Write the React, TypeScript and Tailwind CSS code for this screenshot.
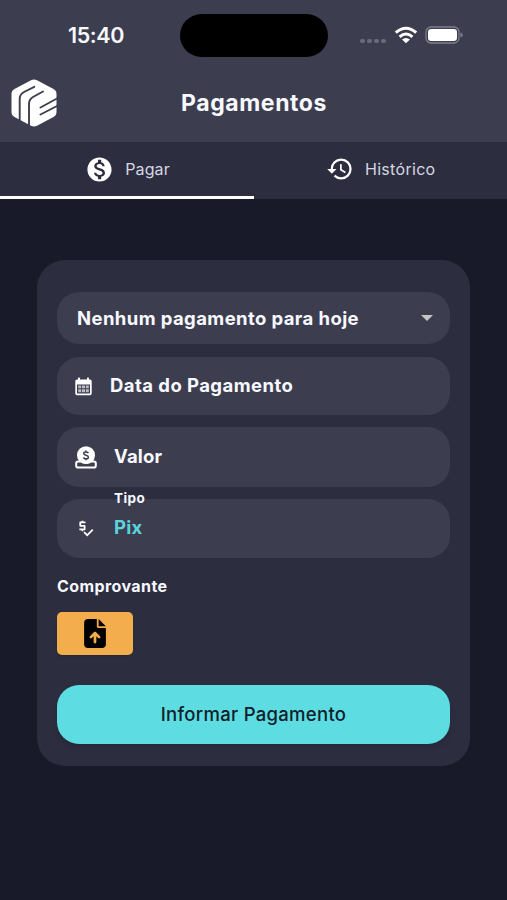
import React from 'react';
import { MdHistory, MdMonetizationOn, MdPriceCheck } from 'react-icons/md';
import { FaFileArrowUp } from 'react-icons/fa6';

const Logo = () => (
  <svg viewBox="0 0 46 48" className="w-[46px] h-12" fill="none">
    <path
      d="M20 1.2Q23 -.4 26 1.2L42.500 10Q45.500 11.700 45.500 15V33Q45.500 36.300 42.500 38L26 46.800Q23 48.400 20 46.800L3.500 38Q.5 36.300 .5 33V15Q.5 11.700 3.500 10Z"
      fill="#fff"
    />
    <g stroke="#3c3e4f" strokeWidth="1.900" strokeLinecap="round">
      <path d="M23.300 7.800L13 13Q8.700 15.300 8.700 20V42" />
      <path d="M32 12.500L22 18Q18 20.500 18 25V47" />
      <path d="M29.500 28.500L46 19.500M29.500 35.500L46 27" />
    </g>
  </svg>
);

const CalendarIcon = () => (
  <svg viewBox="0 0 17 19" className="w-[17px] h-[19px]">
    <path
      fill="#fff"
      fillRule="evenodd"
      d="M3 1.200Q3 .5 3.700.5H4.300Q5 .5 5 1.200V2.500H12V1.200Q12 .5 12.700.5H13.300Q14 .5 14 1.200V2.500H15Q16.700 2.500 16.700 4.200V16.500Q16.700 18.200 15 18.200H2Q.3 18.200 .3 16.500V4.200Q.3 2.500 2 2.500H3ZM2 7.500V15.700Q2 16.500 2.800 16.500H14.200Q15 16.500 15 15.700V7.500Z"
    />
    <path fill="#b9bac5" d="M3.200 8.400h3v2.900h-3zM7 8.400h3v2.900H7zM10.800 8.400h3v2.900h-3zM3.200 12.300h3v2.900h-3zM7 12.300h3v2.900H7zM10.800 12.300h3v2.900h-3z" />
  </svg>
);

// coin dropping into a slotted tray
const CoinSlotIcon = () => (
  <svg viewBox="0 0 22 23" className="w-[22px] h-[23px]" fill="none">
    <rect x="1.200" y="15.500" width="19.600" height="6" rx="1.800" stroke="#fff" strokeWidth="2" />
    <path d="M4 18.300H18" stroke="#3c3e4f" strokeWidth="1.800" strokeLinecap="round" />
    <circle cx="11" cy="9.200" r="9" fill="#fff" />
    <path d="M13.400 7.200Q12.800 6 11 6Q8.700 6 8.700 7.600Q8.700 8.800 11 9.300Q13.400 9.800 13.400 11.200Q13.400 12.800 11 12.800Q9.100 12.800 8.500 11.400M11 4.400V6M11 12.800V14.300" stroke="#3c3e4f" strokeWidth="1.500" />
    <path d="M4 19H18" stroke="#3c3e4f" strokeWidth="1.300" strokeLinecap="round" />
  </svg>
);

const StatusBar = () => (
  <div className="flex h-[71px] items-start">
    <div className="w-[180px] pt-[21px] pl-[68px] text-[21.500px] leading-[28px] font-semibold tracking-[-0.400px]">15:40</div>
    <div className="mt-[14px] h-[43px] w-[148px] rounded-full bg-black" />
    <div className="flex flex-1 items-center pt-[26px] pl-8">
      <div className="mt-[12px] flex gap-[2.500px]">
        {[0, 1, 2, 3].map((i) => (
          <span key={i} className="h-[4.500px] w-[4.500px] rounded-full bg-[#6a6c7a]" />
        ))}
      </div>
      <svg viewBox="0 0 24 18" className="ml-[8px] h-[18px] w-6" fill="none" stroke="#fff" strokeWidth="3">
        <path d="M1.800 6.700Q12 -2.300 22.200 6.700" />
        <path d="M5.600 10.800Q12 5.200 18.400 10.800" />
        <path d="M8 13.500Q12 10.300 16 13.500L12 17.300Z" fill="#fff" stroke="none" />
      </svg>
      <svg viewBox="0 0 38 18" className="ml-[7px] h-[18px] w-[38px]">
        <rect x="1" y="1" width="33" height="16" rx="5" fill="none" stroke="#7d7f8c" strokeWidth="1.300" />
        <rect x="3" y="3" width="29" height="12" rx="3.200" fill="#fff" />
        <path d="M35.500 6.500Q37.800 7.200 37.800 9T35.500 11.500Z" fill="#7d7f8c" />
      </svg>
    </div>
  </div>
);

const App = () => {
  return (
    <div className="h-[900px] w-[507px] overflow-hidden bg-[#191a29] font-['Inter',sans-serif] text-[#f8f8ff]">
      {/* Header */}
      <header className="h-[142px] bg-[#3c3e4f]">
        <StatusBar />
        <div className="flex h-[64px] items-center">
          <div className="w-[181px] pl-[11px]">
            <Logo />
          </div>
          <h1 className="pt-px text-[23px] font-bold tracking-[0.600px]">Pagamentos</h1>
        </div>
      </header>

      {/* Tabs */}
      <nav className="flex h-[57px] bg-[#2c2e40] text-base text-[#d6d7e0]">
        <div className="flex w-[254px] items-center justify-center border-b-3 border-white pl-[1px]">
          <MdMonetizationOn className="mr-[11px] h-[29px] w-[29px] text-white" />
          <span className="tracking-[0.100px]">Pagar</span>
        </div>
        <div className="flex flex-1 items-center pb-[3px] pl-[72px]">
          <MdHistory className="mr-[11px] h-[28px] w-[28px] text-white" />
          <span className="tracking-[0.300px]">Histórico</span>
        </div>
      </nav>

      {/* Payment form */}
      <main className="mx-auto mt-[61px] flex h-[506px] w-[433px] flex-col rounded-[28px] bg-[#2c2e40] px-5 pt-8 text-[18.500px] font-bold">
        <div className="flex h-[52px] items-center justify-between rounded-[22px] bg-[#3c3e4f] pr-[17px] pl-[20px]">
          <span className="pt-px tracking-[0.400px]">Nenhum pagamento para hoje</span>
          <svg viewBox="0 0 12 6" className="h-[6px] w-3">
            <path d="M0 0H12L6 6Z" fill="#c3c4c6" />
          </svg>
        </div>
        <div className="mt-[13px] flex h-[58px] items-center rounded-[22px] bg-[#3c3e4f] pl-[18px]">
          <CalendarIcon />
          <span className="ml-[18px] tracking-[0.440px]">Data do Pagamento</span>
        </div>
        <div className="mt-3 flex h-[60px] items-center rounded-[22px] bg-[#3c3e4f] pl-[18px]">
          <CoinSlotIcon />
          <span className="ml-[17px] tracking-[0.200px]">Valor</span>
        </div>
        <div className="relative mt-3 flex h-[59px] items-center rounded-[22px] bg-[#3c3e4f] pl-[18px]">
          <MdPriceCheck className="h-[21px] w-[21px] text-white" />
          <span className="absolute -top-[10px] left-[57px] text-[13.500px] leading-[18px] tracking-[0.400px]">Tipo</span>
          <span className="mb-[2px] ml-[18px] tracking-[0.200px] text-[#5ad4dc]">Pix</span>
        </div>
        <div className="mt-[16px] text-[16px] leading-[24px] tracking-[0.420px]">Comprovante</div>
        <button className="mt-[14px] flex h-[43px] w-[76px] items-center justify-center rounded-[5px] bg-[#f4ad4c] text-black shadow-sm">
          <FaFileArrowUp className="h-[29px] w-[22px]" />
        </button>
        <button className="mt-[30px] h-[59px] rounded-[22px] bg-[#5ddde1] pt-px text-[18.500px] font-medium tracking-[0.300px] text-[#10202a] shadow-md">
          Informar Pagamento
        </button>
      </main>
    </div>
  );
};

export default App;
